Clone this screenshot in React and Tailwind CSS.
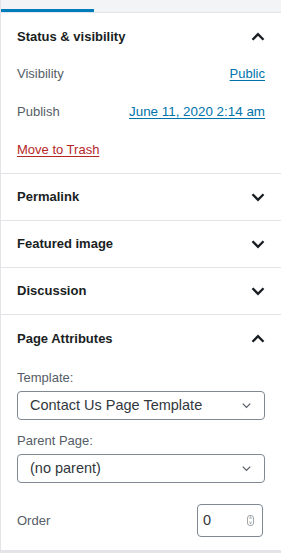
import React from "react";

function Chevron({ up, className = "", width = "2.2" }) {
  return (
    <svg viewBox="0 0 24 24" className={className} fill="none" stroke="currentColor" strokeWidth={width}>
      {up ? <path d="M6 15l6-6 6 6" /> : <path d="M6 9l6 6 6-6" />}
    </svg>
  );
}

function PanelHeader({ title, open }) {
  return (
    <div className="h-[48px] flex items-center justify-between pl-4 pr-[12px] text-[13px] font-semibold text-[#191e23]">
      <span>{title}</span>
      <Chevron up={open} width="2.6" className="w-[22px] h-[22px] text-[#191e23]" />
    </div>
  );
}

function Select({ value }) {
  return (
    <div className="h-[29px] border border-[#7e8993] rounded-[4px] flex items-center justify-between pl-3 pr-[10px] text-[14.5px] text-[#32373c]">
      <span>{value}</span>
      <Chevron width="2" className="w-[15px] h-[15px] text-[#555d66]" />
    </div>
  );
}

export default function App() {
  return (
    <div className="w-[281px] h-[553px] bg-white border-l border-[#e2e4e7] font-['Liberation_Sans',Arial,sans-serif] flex flex-col">
      <div className="h-[13px] bg-[#f3f4f5] border-b border-[#e2e4e7] flex items-end">
        <div className="w-[93px] h-[3px] bg-[#007cba]" />
      </div>

      <div className="border-b border-[#e2e4e7] h-[161px]">
        <PanelHeader title="Status & visibility" open />
        <div className="px-4 text-[13px]">
          <div className="h-[26px] flex items-center justify-between text-[#555d66]">
            <span>Visibility</span>
            <span className="text-[#0073aa] underline underline-offset-2">Public</span>
          </div>
          <div className="h-[12px]" />
          <div className="h-[26px] flex items-center justify-between text-[#555d66]">
            <span>Publish</span>
            <span className="text-[#0073aa] underline underline-offset-2 text-[13.4px]">June 11, 2020 2:14 am</span>
          </div>
          <div className="h-[12px]" />
          <div className="h-[26px] flex items-center text-[#b52727] underline underline-offset-2">
            Move to Trash
          </div>
        </div>
      </div>

      <div className="border-b border-[#e2e4e7] h-[47px] flex flex-col justify-center">
        <PanelHeader title="Permalink" />
      </div>
      <div className="border-b border-[#e2e4e7] h-[47px] flex flex-col justify-center">
        <PanelHeader title="Featured image" />
      </div>
      <div className="border-b border-[#e2e4e7] h-[47px] flex flex-col justify-center">
        <PanelHeader title="Discussion" />
      </div>

      <div className="flex-1 flex flex-col">
        <PanelHeader title="Page Attributes" open />
        <div className="px-4 text-[13px] text-[#555d66]">
          <div className="h-[5px]" />
          <div className="h-[20px] flex items-center">Template:</div>
          <div className="h-[3px]" />
          <Select value="Contact Us Page Template" />
          <div className="h-[11px]" />
          <div className="h-[20px] flex items-center">Parent Page:</div>
          <div className="h-[3px]" />
          <Select value="(no parent)" />
          <div className="h-[21px]" />
          <div className="flex items-center justify-between">
            <span>Order</span>
            <div className="w-[66px] h-[33px] border border-[#7e8993] rounded-[4px] flex items-center justify-between pl-[5px] pr-[8px] text-[14.5px] text-[#32373c] mr-[2px]">
              <span>0</span>
              <div className="w-[7px] h-[11px] border border-[#a0a5aa] rounded-[3px] flex flex-col items-center justify-center text-[5px] leading-[5px] text-[#555d66]">
                <span>˄</span>
                <span>˅</span>
              </div>
            </div>
          </div>
        </div>
        <div className="flex-1" />
        <div className="h-[3px] bg-[#e2e4e7]" />
      </div>
    </div>
  );
}
